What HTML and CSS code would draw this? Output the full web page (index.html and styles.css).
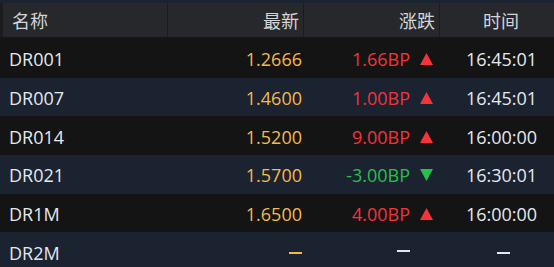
FILE: index.html
```html
<!DOCTYPE html>
<html lang="zh">
<head>
<meta charset="utf-8">
<link rel="stylesheet" href="styles.css">
</head>
<body>
<div class="table">
  <div class="head">
    <div class="hc name">名称</div>
    <div class="hc num">最新</div>
    <div class="hc chg">涨跌</div>
    <div class="hc time">时间</div>
  </div>
  <div class="row dark">
    <div class="c name">DR001</div>
    <div class="c num">1.2666</div>
    <div class="c chg up"><span class="v">1.66BP</span><svg class="tri" viewBox="0 0 13 12"><path d="M6.5 0 L13 12 L0 12 Z"/></svg></div>
    <div class="c time">16:45:01</div>
  </div>
  <div class="row navy">
    <div class="c name">DR007</div>
    <div class="c num">1.4600</div>
    <div class="c chg up"><span class="v">1.00BP</span><svg class="tri" viewBox="0 0 13 12"><path d="M6.5 0 L13 12 L0 12 Z"/></svg></div>
    <div class="c time">16:45:01</div>
  </div>
  <div class="row dark">
    <div class="c name">DR014</div>
    <div class="c num">1.5200</div>
    <div class="c chg up"><span class="v">9.00BP</span><svg class="tri" viewBox="0 0 13 12"><path d="M6.5 0 L13 12 L0 12 Z"/></svg></div>
    <div class="c time">16:00:00</div>
  </div>
  <div class="row navy">
    <div class="c name">DR021</div>
    <div class="c num">1.5700</div>
    <div class="c chg down"><span class="v">-3.00BP</span><svg class="tri" viewBox="0 0 13 12"><path d="M0 0 L13 0 L6.5 12 Z"/></svg></div>
    <div class="c time">16:30:01</div>
  </div>
  <div class="row dark">
    <div class="c name">DR1M</div>
    <div class="c num">1.6500</div>
    <div class="c chg up"><span class="v">4.00BP</span><svg class="tri" viewBox="0 0 13 12"><path d="M6.5 0 L13 12 L0 12 Z"/></svg></div>
    <div class="c time">16:00:00</div>
  </div>
  <div class="row navy">
    <div class="c name">DR2M</div>
    <div class="c num"><span class="dash yellow" title="–"></span></div>
    <div class="c chg"><span class="dash white" title="–"></span><span class="tri"></span></div>
    <div class="c time"><span class="dash white" title="–"></span></div>
  </div>
</div>
</body>
</html>
```

FILE: styles.css
```css
html, body {
  margin: 0;
  padding: 0;
  background: #1b2230;
}
body {
  width: 554px;
  height: 267px;
  overflow: hidden;
  font-family: "Open Sans", "Noto Sans CJK SC", sans-serif;
  font-size: 18px;
}
.table {
  display: flex;
  flex-direction: column;
  padding-top: 3px;
  background: #1b2230;
}
.head {
  display: grid;
  grid-template-columns: 165px 136px 136px 1fr;
  height: 34px;
  padding-left: 3px;
  background: #1c1c1e;
  border-bottom: 2px solid #161616;
}
.hc {
  background: #27282b;
  color: #d2d4d8;
  font-family: "Noto Sans CJK SC", sans-serif;
  font-size: 18px;
  line-height: 34px;
  margin-right: 1px;
}
.head .name { padding-left: 9px; }
.head .num { text-align: right; padding-right: 4px; }
.head .chg { text-align: right; padding-right: 4px; }
.head .time { text-align: center; padding-left: 8px; margin-right: 0; }
.row {
  display: grid;
  grid-template-columns: 168px 136px 136px 1fr;
  height: 38.7px;
  align-items: center;
  color: #e3e8ef;
}
.dark { background: #141414; }
.navy { background: #1b2230; }
.c { padding-top: 2px; }
.row .name { padding-left: 9px; }
.row .num { text-align: right; padding-right: 2px; color: #f5b94a; }
.row .chg { display: flex; justify-content: flex-end; align-items: center; padding-right: 7px; }
.up { color: #f5333b; }
.down { color: #26c04a; }
.tri { width: 13px; height: 12px; margin-left: 10px; fill: currentColor; flex: none; }
.row .time { text-align: center; padding-left: 9px; }
.dash {
  display: inline-block;
  width: 13px;
  height: 2px;
  vertical-align: middle;
  margin-bottom: 3px;
}
.yellow { background: #f5b94a; }
.white { background: #e3e8ef; }
.row .time .dash { margin-left: 3px; }
```
